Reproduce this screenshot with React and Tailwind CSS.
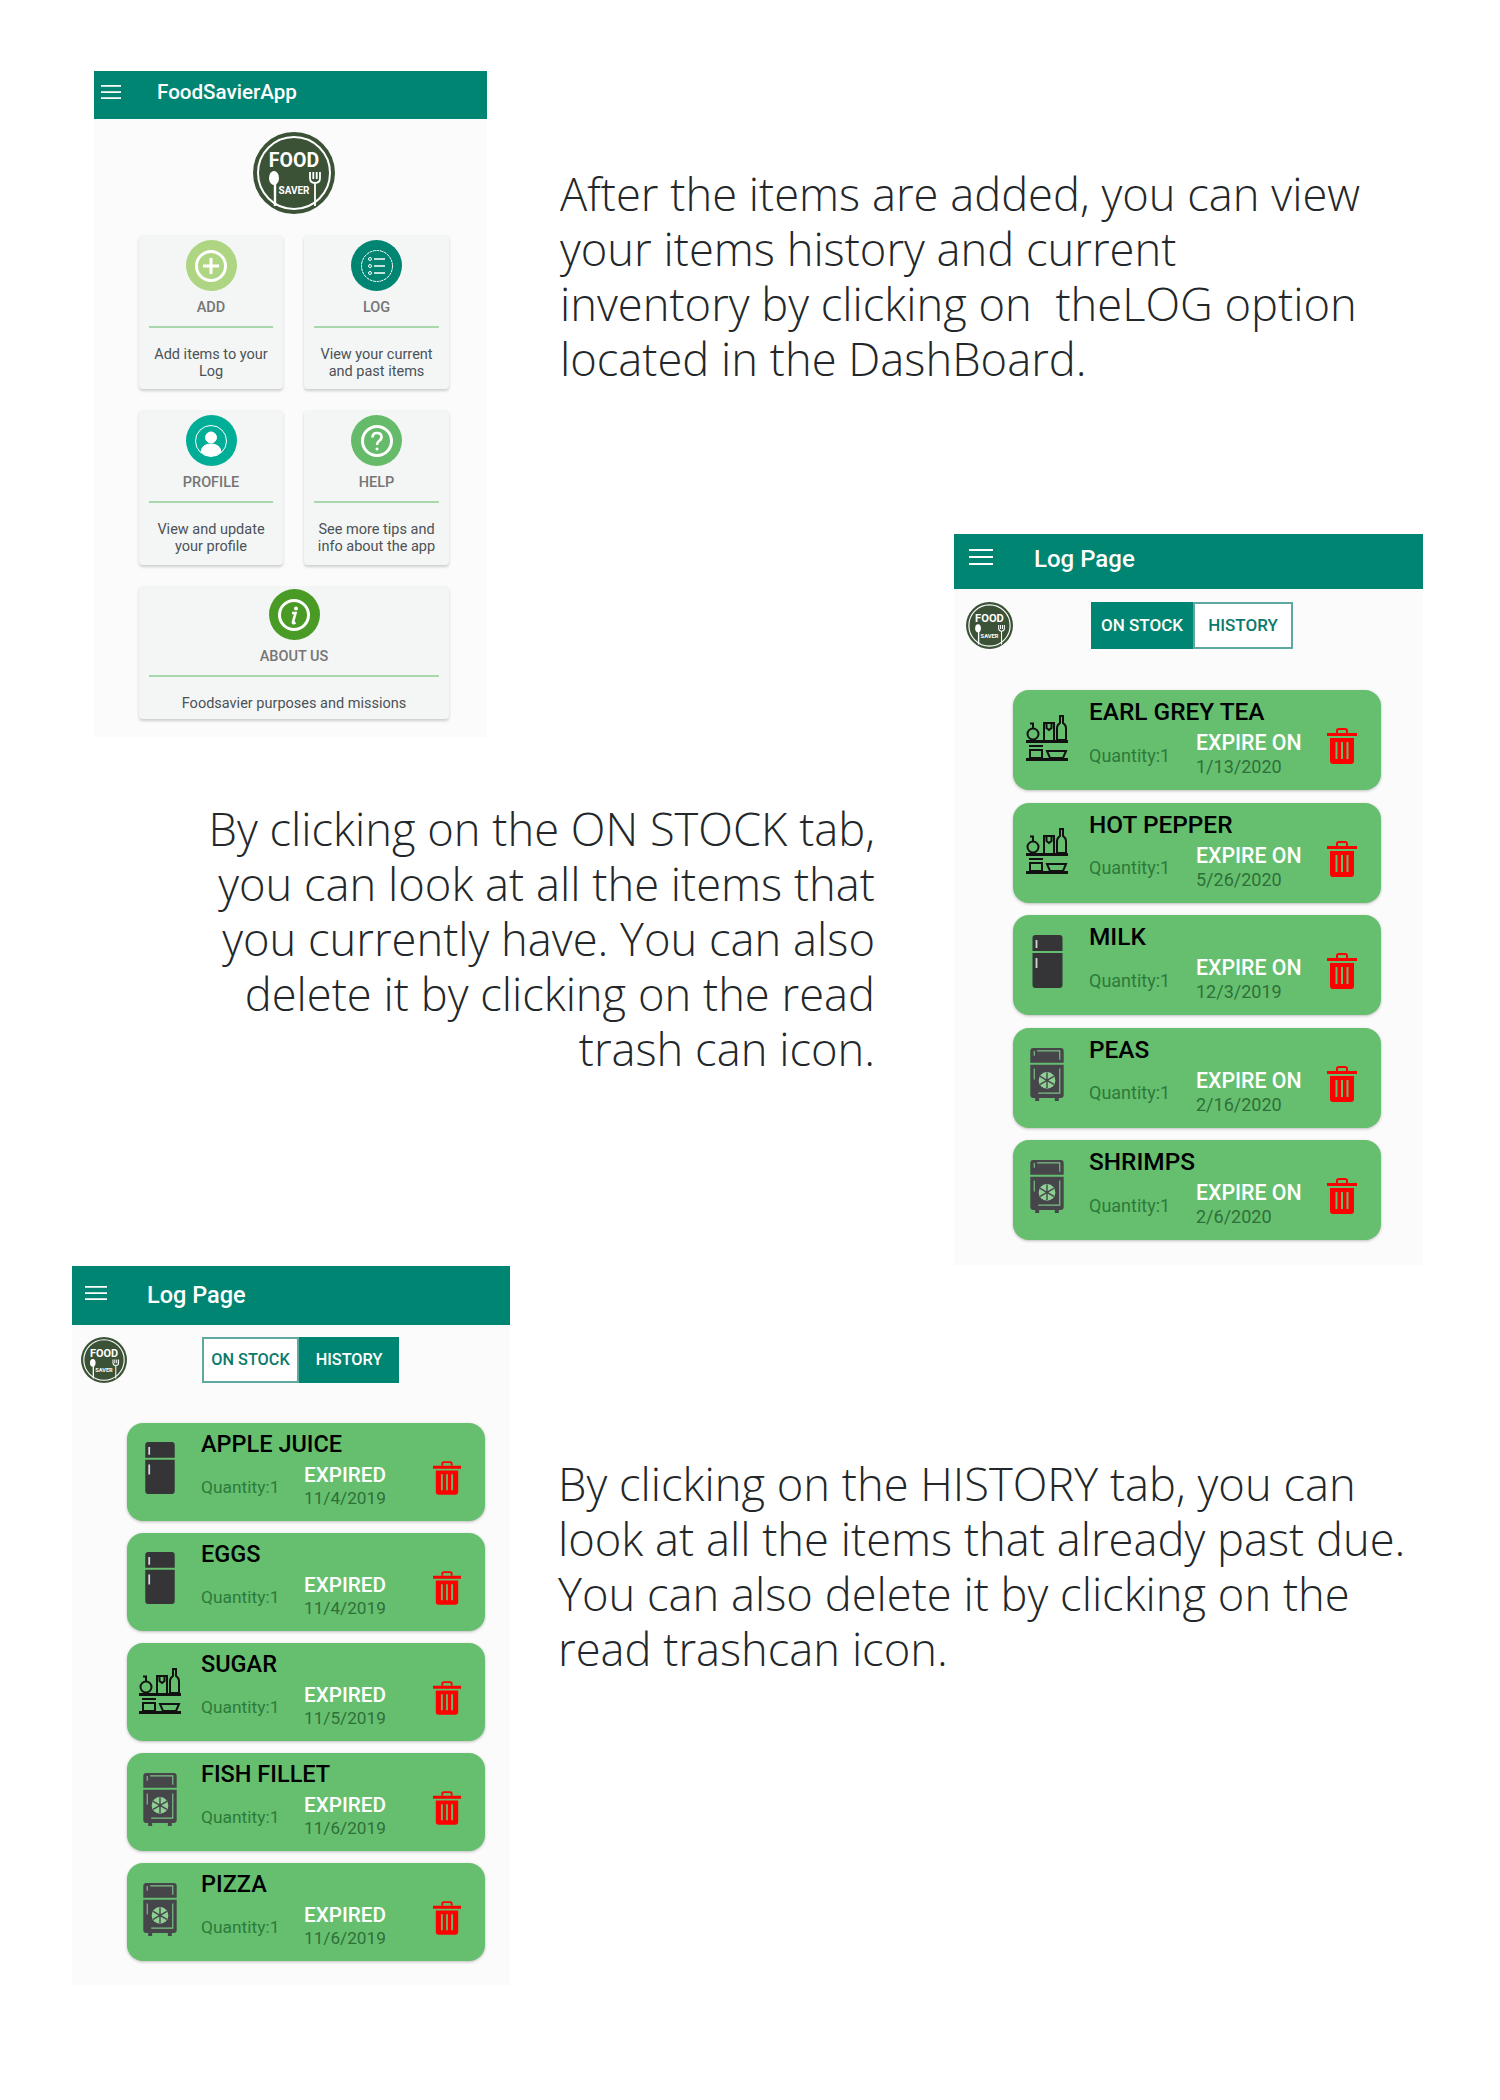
import React from 'react';

const stockItems = [
    { name: 'EARL GREY TEA', date: '1/13/2020', kind: 'shelf' },
    { name: 'HOT PEPPER', date: '5/26/2020', kind: 'shelf' },
    { name: 'MILK', date: '12/3/2019', kind: 'fridge' },
    { name: 'PEAS', date: '2/16/2020', kind: 'freezer' },
    { name: 'SHRIMPS', date: '2/6/2020', kind: 'freezer' },
];

const historyItems = [
    { name: 'APPLE JUICE', date: '11/4/2019', kind: 'fridge' },
    { name: 'EGGS', date: '11/4/2019', kind: 'fridge' },
    { name: 'SUGAR', date: '11/5/2019', kind: 'shelf' },
    { name: 'FISH FILLET', date: '11/6/2019', kind: 'freezer' },
    { name: 'PIZZA', date: '11/6/2019', kind: 'freezer' },
];

const Hamburger = ({ className }) => (
    <svg viewBox="0 0 24 16" preserveAspectRatio="none" className={className}>
        <path d="M0 1H24M0 8H24M0 15H24" stroke="#fff" strokeWidth="2" />
    </svg>
);

const Logo = ({ className }) => (
    <svg viewBox="0 0 82 82" className={className}>
        <circle cx="41" cy="41" r="41" fill="#3b5236" />
        <circle cx="41" cy="41" r="36" fill="none" stroke="#fff" strokeWidth="2" />
        <text x="41" y="35" textAnchor="middle" fontFamily="Roboto" fontWeight="700" fontSize="19.500" fill="#fff">FOOD</text>
        <text x="41" y="62" textAnchor="middle" fontFamily="Roboto" fontWeight="700" fontSize="10" fill="#fff">SAVER</text>
        <ellipse cx="21" cy="46" rx="5" ry="7" fill="#fff" />
        <path d="M22 50V74" stroke="#fff" strokeWidth="2.400" />
        <path d="M57 40V46Q57 51 62 51Q67 51 67 46V40M60.300 40V47M63.700 40V47M62 50V74" fill="none" stroke="#fff" strokeWidth="1.800" />
    </svg>
);

const ShelfIcon = ({ className }) => (
    <svg viewBox="0 0 42 46" className={className} fill="none" stroke="#111" strokeWidth="2">
        <circle cx="7" cy="19" r="5.500" />
        <path d="M7 13V9M4 8.500H8" />
        <path d="M18 25V8H28V25M20.500 8V13L23 15L25.500 13V8" />
        <path d="M31 25V13Q31 10 34 8V1H37V8Q40 10 40 13V25Z" />
        <path d="M0 26.500H42" strokeWidth="3" />
        <path d="M4 35H16V43H4ZM3 31H17" />
        <path d="M21 36H40L37 43H24Z" />
        <path d="M0 44.500H42" strokeWidth="3" />
    </svg>
);

const FridgeIcon = ({ className }) => (
    <svg viewBox="0 0 30 53" className={className}>
        <path d="M3 0H27Q30 0 30 3V16H0V3Q0 0 3 0ZM0 18H30V50Q30 53 27 53H3Q0 53 0 50Z" fill="#353537" />
        <path d="M4 5V13M4 23V33" stroke="#cfd8cf" strokeWidth="1.800" />
    </svg>
);

const FreezerIcon = ({ className }) => (
    <svg viewBox="0 0 34 54" className={className}>
        <path d="M3 0H31Q34 0 34 3V15H0V3Q0 0 3 0ZM0 17H34V48Q34 51 31 51H29V54H25V51H9V54H5V51H3Q0 51 0 48Z" fill="#45454a" />
        <path d="M7 3H30V12M4 3V8M4 21V32M30 21V46H8" fill="none" stroke="#7cc083" strokeWidth="1.200" />
        <circle cx="17" cy="33" r="8.500" fill="#8fcf94" />
        <path d="M17 25V41M10 29L24 37M24 29L10 37" stroke="#45454a" strokeWidth="1.400" />
    </svg>
);

const TrashIcon = ({ className }) => (
    <svg viewBox="0 0 30 36" className={className}>
        <path d="M10 5V2.500Q10 1 12 1H18Q20 1 20 2.500V5" fill="none" stroke="#f00" strokeWidth="2" />
        <path d="M0 5H30V8H0ZM3 10H27V33Q27 36 24 36H6Q3 36 3 33Z" fill="#f00" />
        <path d="M9.500 14V31M15 14V31M20.500 14V31" stroke="#66bb6a" strokeWidth="2" />
    </svg>
);

const itemIcons = { shelf: ShelfIcon, fridge: FridgeIcon, freezer: FreezerIcon };

const DashCard = ({ title, text, circle, icon, className }) => (
    <div className={`flex flex-col items-center bg-[#f3f6f4] rounded-sm shadow-[0_2px_3px_rgba(0,0,0,0.18)] pt-[5px] px-[10px] ${className}`}>
        <div className={`flex items-center justify-center w-[51px] h-[51px] rounded-full ${circle}`}>{icon}</div>
        <div className="mt-[8px] text-[14.5px] leading-[18px] font-medium text-[#757575]">{title}</div>
        <div className="w-full h-[2px] mt-[9px] bg-[#a9d8ab]" />
        <div className="mt-[18px] text-[14.5px] leading-[17px] text-[#4c5157] text-center whitespace-pre-line">{text}</div>
    </div>
);

const IconRing = ({ children }) => (
    <svg viewBox="0 0 34 34" className="w-[34px] h-[34px]" fill="none" stroke="#fff">{children}</svg>
);

const Dashboard = () => (
    <div className="w-[393px] h-[666px] bg-[#fbfbfb]">
        <div className="flex items-center h-[48px] pb-[6px] bg-[#008573]">
            <Hamburger className="w-[20px] h-[14px] ml-[7px]" />
            <span className="ml-[36px] text-[20.6px] font-medium text-white">FoodSavierApp</span>
        </div>
        <Logo className="w-[82px] h-[82px] ml-[159px] mt-[13px] mb-[21px]" />
        <div className="grid grid-cols-[144px_145px] gap-[21px] ml-[45px]">
            <DashCard
                title="ADD"
                text={'Add items to your\nLog'}
                circle="bg-[#aed581]"
                className="h-[154px]"
                icon={<IconRing><circle cx="17" cy="17" r="14.500" strokeWidth="3" /><path d="M17 9V25M9 17H25" strokeWidth="3" /></IconRing>}
            />
            <DashCard
                title="LOG"
                text={'View your current\nand past items'}
                circle="bg-[#008573]"
                className="h-[154px]"
                icon={<IconRing><circle cx="17" cy="17" r="15.500" strokeDasharray="3 0.6" /><path d="M14 10H25M14 17H25M14 24H25" strokeWidth="1.300" /><circle cx="10" cy="10" r="1.500" /><circle cx="10" cy="17" r="1.500" /><circle cx="10" cy="24" r="1.500" /></IconRing>}
            />
            <DashCard
                title="PROFILE"
                text={'View and update\nyour profile'}
                circle="bg-[#00ad97]"
                className="h-[155px]"
                icon={<IconRing><circle cx="17" cy="17" r="15.500" /><circle cx="17" cy="13.500" r="5.500" fill="#fff" /><path d="M7 28Q8 20 17 20Q26 20 27 28Q22 32 17 32Q12 32 7 28Z" fill="#fff" /></IconRing>}
            />
            <DashCard
                title="HELP"
                text={'See more tips and\ninfo about the app'}
                circle="bg-[#66bb6a]"
                className="h-[155px]"
                icon={<IconRing><circle cx="17" cy="17" r="14.500" strokeWidth="3" /><path d="M12.500 13.500Q12.500 9 17 9Q21.500 9 21.500 13Q21.500 15.500 19 17Q17 18.500 17 21" strokeWidth="2.600" /><circle cx="17" cy="25" r="1.500" fill="#fff" stroke="none" /></IconRing>}
            />
            <DashCard
                title="ABOUT US"
                text="Foodsavier purposes and missions"
                circle="bg-[#4a9a26]"
                className="h-[133px] col-span-2 !pt-[3px]"
                icon={<IconRing><circle cx="17" cy="17" r="14.500" strokeWidth="3" /><path d="M15 15H18.500L16 24Q15.500 26 18.500 24.500" strokeWidth="2.600" /><circle cx="19" cy="10.500" r="2" fill="#fff" stroke="none" /></IconRing>}
            />
        </div>
    </div>
);

const ItemCard = ({ item, label, large }) => {
    const Icon = itemIcons[item.kind];
    const iconSize = {
        shelf: 'w-[42px] h-[46px] mt-[25px]',
        fridge: large ? 'w-[31px] h-[53px] mt-[20px]' : 'w-[30px] h-[52px] mt-[19px]',
        freezer: 'w-[34px] h-[53px] mt-[20px]',
    }[item.kind];

    return (
        <div className={`flex items-start bg-[#66bf6f] rounded-[16px] shadow-[0_1px_3px_rgba(0,0,0,0.25)] ${large ? 'h-[100px]' : 'h-[98px]'}`}>
            <div className={`flex justify-center shrink-0 ${large ? 'w-[42px] ml-[13px] mr-[21px]' : 'w-[42px] ml-[12px] mr-[20px]'}`}>
                <Icon className={iconSize} />
            </div>
            <div className="flex flex-col flex-1">
                <div className={`font-medium text-black leading-[26px] ${large ? 'text-[24.4px] mt-[9px]' : 'text-[23.5px] mt-[8px]'}`}>{item.name}</div>
                <div className={`flex items-center ${large ? 'mt-[6px]' : 'mt-[7px]'}`}>
                    <span className={`text-[#2c7a3a] ${large ? 'w-[107px] text-[18px]' : 'w-[103px] text-[17.4px]'}`}>Quantity:1</span>
                    <div className="flex flex-col">
                        <span className={`font-medium text-white ${large ? 'text-[21.3px] leading-[24px]' : 'text-[20.7px] leading-[23px]'}`}>{label}</span>
                        <span className={`text-[#2d7039] ${large ? 'text-[18px] leading-[24px]' : 'text-[17.2px] leading-[23px]'}`}>{item.date}</span>
                    </div>
                </div>
            </div>
            <TrashIcon className={large ? 'w-[30px] h-[36px] mt-[38px] mr-[24px]' : 'w-[28px] h-[34px] mt-[38px] mr-[24px]'} />
        </div>
    );
};

const LogPage = ({ items, label, active, large }) => {
    const on = 'bg-[#008573] text-white';
    const off = 'bg-white text-[#0b7a6c] border-2 border-[#5fa8a0]';

    return (
        <div className={`bg-[#fbfbfb] ${large ? 'w-[469px] h-[731px]' : 'w-[438px] h-[719px]'}`}>
            <div className={`flex items-center bg-[#008573] ${large ? 'h-[55px]' : 'h-[59px]'}`}>
                <Hamburger className={large ? 'w-[24px] h-[16px] ml-[15px] -mt-[10px]' : 'w-[22px] h-[14px] ml-[13px] -mt-[5px]'} />
                <span className={`font-medium text-white ${large ? 'ml-[41px] -mt-[5px] text-[24px]' : 'ml-[40px] text-[23.5px]'}`}>Log Page</span>
            </div>
            <div className={`flex items-start ${large ? 'mt-[13px] ml-[12px]' : 'mt-[12px] ml-[9px]'}`}>
                <Logo className={large ? 'w-[47px] h-[47px]' : 'w-[46px] h-[46px]'} />
                <div className={`flex font-medium ${large ? 'ml-[78px] w-[202px] h-[47px] text-[17px]' : 'ml-[75px] w-[197px] h-[46px] text-[16.3px]'}`}>
                    <div className={`flex items-center justify-center ${large ? 'w-[102px]' : 'w-[97px]'} ${active === 'stock' ? on : off}`}>ON STOCK</div>
                    <div className={`flex items-center justify-center flex-1 ${active === 'history' ? on : off}`}>HISTORY</div>
                </div>
            </div>
            <div className={`flex flex-col ${large ? 'mt-[41px] ml-[59px] w-[368px] gap-[12.5px]' : 'mt-[40px] ml-[55px] w-[358px] gap-[12px]'}`}>
                {items.map((item) => (
                    <ItemCard key={item.name} item={item} label={label} large={large} />
                ))}
            </div>
        </div>
    );
};

const bodyText = "font-['Open_Sans',sans-serif] font-light text-[45.3px] leading-[55px] text-[#23272a] whitespace-pre";

export default function App() {
    return (
        <div className="w-[1500px] min-h-[2100px] bg-white font-['Roboto',sans-serif]">
            <div className="grid grid-cols-[560px_394px_546px] grid-rows-[534px_203px_auto]">
                <div className="col-start-1 row-start-1 row-span-2 pl-[94px] pt-[71px]">
                    <Dashboard />
                </div>
                <div className={`col-start-2 col-span-2 row-start-1 pt-[166px] ${bodyText}`}>
                    {'After the items are added, you can view\nyour items history and current\ninventory by clicking on  theLOG option\nlocated in the DashBoard.'}
                </div>
                <div className="col-start-3 row-start-2 row-span-2">
                    <LogPage items={stockItems} label="EXPIRE ON" active="stock" large />
                </div>
                <div className={`col-start-1 col-span-2 row-start-3 pt-[64px] pr-[79px] text-right ${bodyText}`}>
                    {'By clicking on the ON STOCK tab,\nyou can look at all the items that\nyou currently have. You can also\ndelete it by clicking on the read\ntrash can icon.'}
                </div>
            </div>
            <div className="flex mt-px">
                <div className="ml-[72px]">
                    <LogPage items={historyItems} label="EXPIRED" active="history" />
                </div>
                <div className={`ml-[48px] pt-[190px] ${bodyText}`}>
                    {'By clicking on the HISTORY tab, you can\nlook at all the items that already past due.\nYou can also delete it by clicking on the\nread trashcan icon.'}
                </div>
            </div>
        </div>
    );
}
